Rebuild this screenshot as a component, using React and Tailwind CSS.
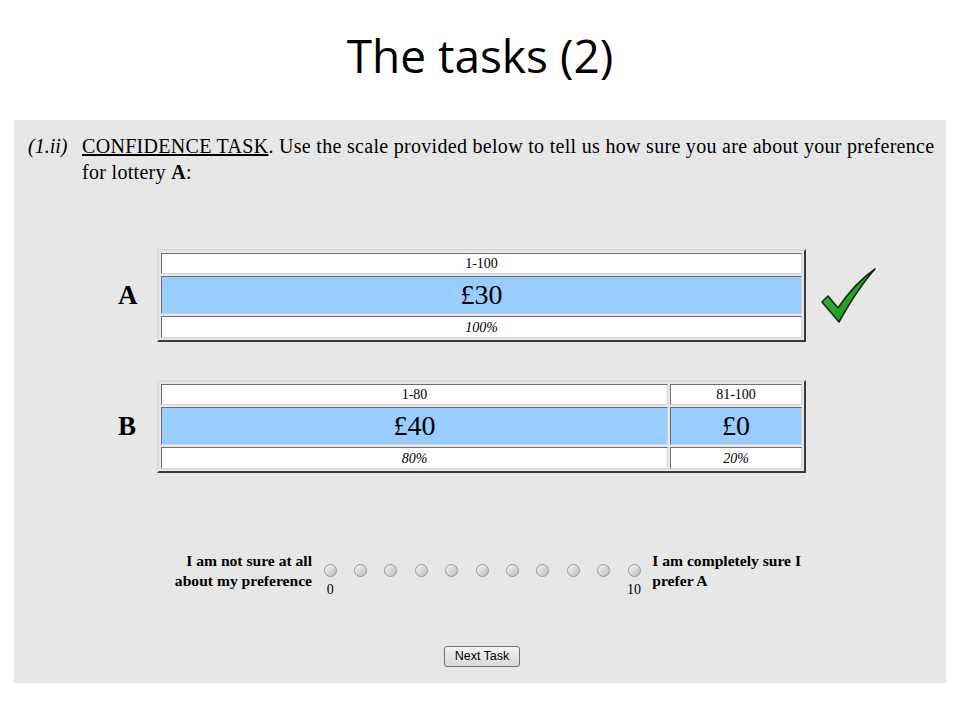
import React from 'react'

const cell =
  'flex items-center justify-center border border-solid border-t-[#6e6e6e] border-l-[#6e6e6e] border-r-[#d4d4d4] border-b-[#d4d4d4]'

function Check() {
  return (
    <svg width="56" height="56" viewBox="0 0 56 56" className="ml-[14px]">
      <defs>
        <linearGradient id="g" x1="0" y1="0" x2="1" y2="1">
          <stop offset="0" stopColor="#3fbf3f" />
          <stop offset="1" stopColor="#138a13" />
        </linearGradient>
      </defs>
      <path
        d="M2 34 L8 28 L18 40 Q34 16 55 1 Q38 20 19 54 Z"
        fill="url(#g)"
        stroke="#0b2e0b"
        strokeWidth="1.6"
        strokeLinejoin="round"
      />
    </svg>
  )
}

function LotteryTable({ cols }) {
  return (
    <div className="flex w-[649px] flex-col gap-[2px] border-2 border-solid border-t-[#dcdcdc] border-l-[#dcdcdc] border-r-[#3a3a3a] border-b-[#3a3a3a] p-[2px]">
      <div className="flex gap-[2px]">
        {cols.map((c, i) => (
          <div key={i} className={`${cell} h-[21px] bg-white text-[14px] ${c.w}`}>
            {c.range}
          </div>
        ))}
      </div>
      <div className="flex gap-[2px]">
        {cols.map((c, i) => (
          <div key={i} className={`${cell} h-[38px] bg-[#99ccff] text-[28px] ${c.w}`}>
            {c.prize}
          </div>
        ))}
      </div>
      <div className="flex gap-[2px]">
        {cols.map((c, i) => (
          <div key={i} className={`${cell} h-[22px] bg-white text-[14px] italic ${c.w}`}>
            {c.pct}
          </div>
        ))}
      </div>
    </div>
  )
}

export default function App() {
  const dots = Array.from({ length: 11 }, (_, i) => i)

  return (
    <div className="h-[720px] w-[960px] bg-white font-['Liberation_Serif',serif] text-black">
      <h1 className="h-[120px] pt-[25px] text-center font-['Open_Sans',sans-serif] text-[46px] leading-[61px] font-normal">
        The tasks (2)
      </h1>

      <div className="mx-[14px] flex h-[563px] w-[932px] flex-col bg-[#e7e7e7]">
        <div className="flex pl-[14px] pt-[13px] text-[20px] leading-[26px] tracking-[0.3px] whitespace-nowrap">
          <span className="w-[54px] italic tracking-normal">(1.ii)</span>
          <p>
            <span className="underline">CONFIDENCE TASK</span>. Use the scale provided below to tell us how
            sure you are about your preference
            <br />
            for lottery <b>A</b>:
          </p>
        </div>

        <div className="mt-[64px] flex items-center pl-[104px]">
          <span className="w-[39px] text-[27px] font-bold">A</span>
          <LotteryTable cols={[{ range: '1-100', prize: '£30', pct: '100%', w: 'flex-1' }]} />
          <Check />
        </div>

        <div className="mt-[38px] flex items-center pl-[104px]">
          <span className="w-[39px] text-[27px] font-bold">B</span>
          <LotteryTable
            cols={[
              { range: '1-80', prize: '£40', pct: '80%', w: 'flex-1' },
              { range: '81-100', prize: '£0', pct: '20%', w: 'w-[132px]' },
            ]}
          />
        </div>

        <div className="mt-[78px] flex pl-[152px]">
          <div className="w-[146px] text-right text-[15.6px] leading-[20px] font-bold">
            I am not sure at all
            <br />
            about my preference
          </div>
          <div className="ml-[3px] flex">
            {dots.map((d) => (
              <div key={d} className="flex w-[30.4px] flex-col items-center pt-[13px]">
                <div className="h-[13px] w-[13px] rounded-full border border-solid border-[#989898] bg-linear-to-br from-[#f6f6f6] to-[#bdbdbd]" />
                <span className="mt-[5px] h-[16px] text-[14px] leading-[16px]">
                  {d === 0 ? '0' : d === 10 ? '10' : ''}
                </span>
              </div>
            ))}
          </div>
          <div className="ml-[3px] text-[15.6px] leading-[20px] font-bold">
            I am completely sure I
            <br />
            prefer A
          </div>
        </div>

        <button
          type="button"
          className="mt-[48px] ml-[430px] h-[21px] w-[76px] rounded-[3px] border border-solid border-[#707070] bg-linear-to-b from-[#f4f4f4] to-[#d9d9d9] font-['Liberation_Sans',sans-serif] text-[12.5px] leading-none"
        >
          Next Task
        </button>
      </div>
    </div>
  )
}
